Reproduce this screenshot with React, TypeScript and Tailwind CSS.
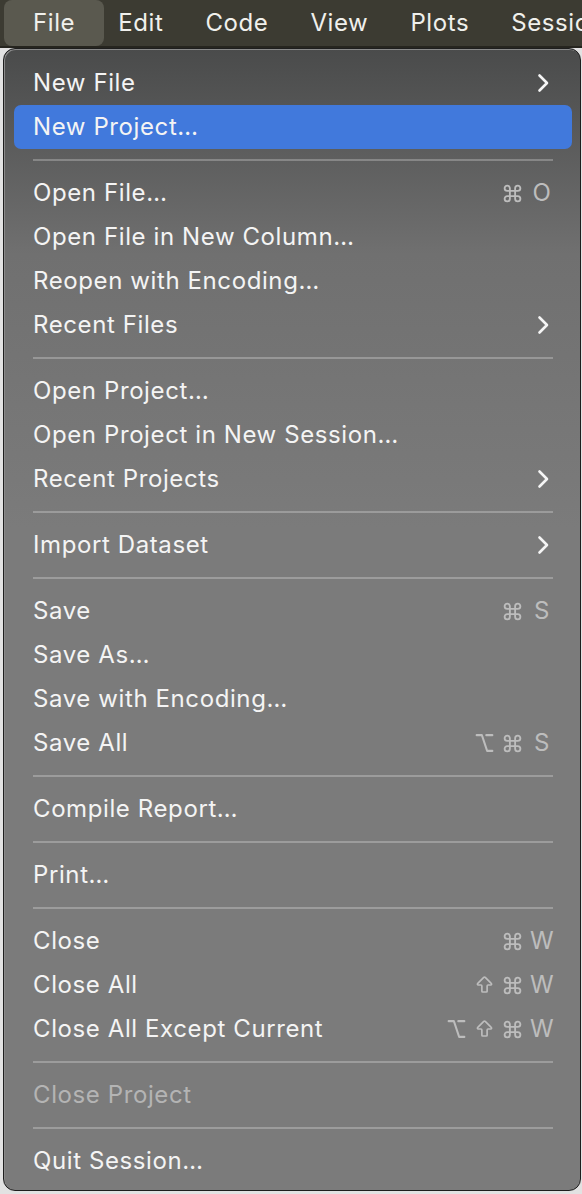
import React from 'react';
import {Command, Option, ArrowBigUp} from 'lucide-react';

type Entry =
  | 'sep'
  | {
      label: string;
      sub?: boolean;
      active?: boolean;
      disabled?: boolean;
      keys?: string[];
    };

const entries: Entry[] = [
  {label: 'New File', sub: true},
  {label: 'New Project…', active: true},
  'sep',
  {label: 'Open File…', keys: ['cmd', 'O']},
  {label: 'Open File in New Column…'},
  {label: 'Reopen with Encoding…'},
  {label: 'Recent Files', sub: true},
  'sep',
  {label: 'Open Project…'},
  {label: 'Open Project in New Session…'},
  {label: 'Recent Projects', sub: true},
  'sep',
  {label: 'Import Dataset', sub: true},
  'sep',
  {label: 'Save', keys: ['cmd', 'S']},
  {label: 'Save As…'},
  {label: 'Save with Encoding…'},
  {label: 'Save All', keys: ['opt', 'cmd', 'S']},
  'sep',
  {label: 'Compile Report…'},
  'sep',
  {label: 'Print…'},
  'sep',
  {label: 'Close', keys: ['cmd', 'W']},
  {label: 'Close All', keys: ['shift', 'cmd', 'W']},
  {label: 'Close All Except Current', keys: ['opt', 'shift', 'cmd', 'W']},
  'sep',
  {label: 'Close Project', disabled: true},
  'sep',
  {label: 'Quit Session…'},
];

const Chevron = () => (
  <svg width="13" height="20" viewBox="0 0 13 20" className="mr-[4px]">
    <path d="M2.5 2.5 L10 10 L2.5 17.5" fill="none" stroke="#f5f5f5" strokeWidth="2.6" strokeLinecap="round" strokeLinejoin="round" />
  </svg>
);

const ModKey = ({k}: {k: string}) => {
  if (k === 'cmd') return <Command size={21} strokeWidth={2.1} />;
  if (k === 'opt') return <Option size={22} strokeWidth={2.3} />;
  return <ArrowBigUp size={26} strokeWidth={1.9} />;
};

const Shortcut = ({keys}: {keys: string[]}) => (
  <div className="flex items-center gap-[7px] text-[#bdbdbd]">
    {keys.map((k, i) =>
      i === keys.length - 1 ? (
        <span key={i} className="w-[24px] text-center">{k}</span>
      ) : (
        <span key={i} className="w-[21px] flex items-center justify-center">
          <ModKey k={k} />
        </span>
      )
    )}
  </div>
);

export default function App() {
  return (
    <div className="w-[582px] h-[1194px] overflow-hidden bg-[#e2e2e2] font-['Inter',sans-serif] tracking-[0.6px]">
      <div className="h-[48px] bg-[#3c3b32] flex items-center text-[24px] text-[#f0f0ec] border-b-[2px] border-[#26251f]">
        <div className="ml-[4px] h-[46px] px-[29px] flex items-center rounded-[8px] bg-[#5a594f]">File</div>
        <div className="ml-[14px] flex items-center gap-[42px] whitespace-nowrap">
          <span>Edit</span>
          <span>Code</span>
          <span>View</span>
          <span>Plots</span>
          <span>Session</span>
        </div>
      </div>

      <div className="ml-[3px] w-[578px] rounded-[12px] border border-[#1e1e1e] bg-linear-to-b from-[#4a4b4b] from-0% via-[#707070] via-18% to-[#7b7b7b] to-42% shadow-[inset_1px_1px_0_#8a8a8a] pt-[12px] pb-[7px] pl-[10px] pr-[8px] text-[24px] text-[#f4f4f4]">
        {entries.map((e, i) =>
          e === 'sep' ? (
            <div key={i} className="h-[22px] flex items-center px-[19px]">
              <div className="h-[2px] w-full bg-white/25" />
            </div>
          ) : (
            <div
              key={i}
              className={
                'h-[44px] flex items-center justify-between pl-[19px] pr-[18px] rounded-[7px] whitespace-nowrap ' +
                (e.active ? 'bg-[#4179dc] ' : '') +
                (e.disabled ? 'text-[#b4b4b4]' : '')
              }
            >
              <span>{e.label}</span>
              {e.sub && <Chevron />}
              {e.keys && <Shortcut keys={e.keys} />}
            </div>
          )
        )}
      </div>
    </div>
  );
}
